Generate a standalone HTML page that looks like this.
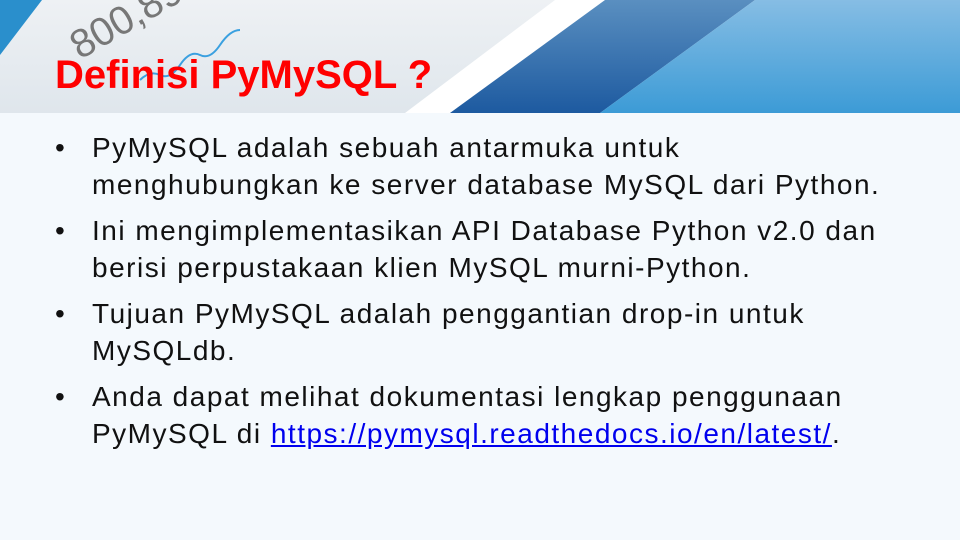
<!DOCTYPE html>
<html><head><meta charset="utf-8"><style>
body{margin:0;width:960px;height:540px;overflow:hidden;background:#f4f9fd;font-family:"Liberation Sans",sans-serif;position:relative}
.t{position:absolute;left:55px;top:53px;color:#f00;font-weight:bold;font-size:40px;margin:0;white-space:nowrap}
ul{position:absolute;left:55px;top:129px;margin:0;padding:0;list-style:none;font-size:28px;color:#111;line-height:37px;white-space:nowrap;letter-spacing:1.5px}
li{position:relative;padding-left:37px;margin-bottom:9px}
li:before{content:"•";position:absolute;left:0}
a{color:#0000ee}
</style></head><body>
<svg width="960" height="113" style="position:absolute;left:0;top:0">
<defs>
<linearGradient id="g1" x1="0" y1="0" x2="0" y2="1"><stop offset="0" stop-color="#eef1f4"/><stop offset="1" stop-color="#dfe6ec"/></linearGradient>
<linearGradient id="g2" x1="0" y1="0" x2="0" y2="1"><stop offset="0" stop-color="#5a8fc0"/><stop offset="1" stop-color="#1d5aa0"/></linearGradient>
<linearGradient id="g3" x1="0" y1="0" x2="0" y2="1"><stop offset="0" stop-color="#86bde4"/><stop offset="1" stop-color="#3c9bd6"/></linearGradient>
</defs>
<rect width="960" height="113" fill="url(#g1)"/>
<polygon points="0,0 42,0 0,55" fill="#2a8fcc"/>
<polygon points="555,0 605,0 450,113 405,113" fill="#ffffff"/>
<polygon points="605,0 755,0 600,113 450,113" fill="url(#g2)"/>
<polygon points="755,0 960,0 960,113 600,113" fill="url(#g3)"/>
<text x="80" y="60" font-size="40" fill="#777" transform="rotate(-30 80 60)" font-family="Liberation Sans">800,89</text>
<path d="M140 80 q10 -10 20 -5 t20 -10 t20 -10 t20 -10 t20 -15" stroke="#3aa0e0" stroke-width="2" fill="none"/>
</svg>
<h1 class="t">Definisi PyMySQL ?</h1>
<ul>
<li>PyMySQL adalah sebuah antarmuka untuk<br>menghubungkan ke server database MySQL dari Python.</li>
<li>Ini mengimplementasikan API Database Python v2.0 dan<br>berisi perpustakaan klien MySQL murni-Python.</li>
<li>Tujuan PyMySQL adalah penggantian drop-in untuk<br>MySQLdb.</li>
<li>Anda dapat melihat dokumentasi lengkap penggunaan<br>PyMySQL di <a><u>https://pymysql.readthedocs.io/en/latest/</u></a>.</li>
</ul>
</body></html>
